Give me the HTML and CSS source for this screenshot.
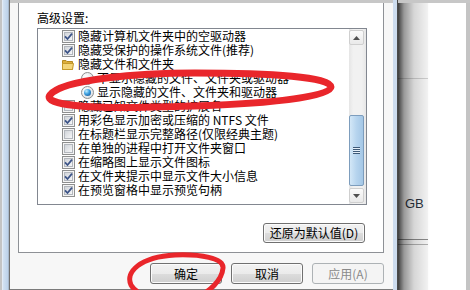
FILE: index.html
```html
<!DOCTYPE html>
<html lang="zh-CN">
<head>
<meta charset="utf-8">
<title>文件夹选项</title>
<link rel="stylesheet" href="styles.css">
</head>
<body>
<div class="screen">
  <div class="frame-l"></div>
  <div class="client">
    <div class="tabpage">
      <div class="label">高级设置:</div>
      <div class="listbox">
        <ul class="rows">
          <li class="row lv1"><span class="cb"><i></i><svg viewBox="0 0 11 11"><path d="M2 5.3 4.5 8 9 2.6"/></svg></span><span>隐藏计算机文件夹中的空驱动器</span></li>
          <li class="row lv1"><span class="cb"><i></i><svg viewBox="0 0 11 11"><path d="M2 5.3 4.5 8 9 2.6"/></svg></span><span>隐藏受保护的操作系统文件(推荐)</span></li>
          <li class="row lv1"><svg class="fold" viewBox="0 0 12 13"><path class="fb" d="M0.5 2.5H4L5 3.5H10.5V11.5H0.5Z"/><path class="ff" d="M0.5 5.5H11.5L10.5 11.5H0.5Z"/></svg><span>隐藏文件和文件夹</span></li>
          <li class="row lv2"><span class="rb"></span><span>不显示隐藏的文件、文件夹或驱动器</span></li>
          <li class="row lv2"><span class="rb on"></span><span>显示隐藏的文件、文件夹和驱动器</span></li>
          <li class="row lv1"><span class="cb"><i></i></span><span>隐藏已知文件类型的扩展名</span></li>
          <li class="row lv1"><span class="cb"><i></i><svg viewBox="0 0 11 11"><path d="M2 5.3 4.5 8 9 2.6"/></svg></span><span>用彩色显示加密或压缩的 NTFS 文件</span></li>
          <li class="row lv1"><span class="cb"><i></i></span><span>在标题栏显示完整路径(仅限经典主题)</span></li>
          <li class="row lv1"><span class="cb"><i></i></span><span>在单独的进程中打开文件夹窗口</span></li>
          <li class="row lv1"><span class="cb"><i></i><svg viewBox="0 0 11 11"><path d="M2 5.3 4.5 8 9 2.6"/></svg></span><span>在缩略图上显示文件图标</span></li>
          <li class="row lv1"><span class="cb"><i></i><svg viewBox="0 0 11 11"><path d="M2 5.3 4.5 8 9 2.6"/></svg></span><span>在文件夹提示中显示文件大小信息</span></li>
          <li class="row lv1"><span class="cb"><i></i><svg viewBox="0 0 11 11"><path d="M2 5.3 4.5 8 9 2.6"/></svg></span><span>在预览窗格中显示预览句柄</span></li>
        </ul>
        <div class="vscroll">
          <div class="sb-btn"><svg viewBox="0 0 7 4"><path d="M3.5 0 7 4H0Z"/></svg></div>
          <div class="sb-track"><div class="sb-thumb"><div class="grip"></div></div></div>
          <div class="sb-btn"><svg viewBox="0 0 7 4"><path d="M0 0H7L3.5 4Z"/></svg></div>
        </div>
      </div>
      <div class="restore"><button class="btn wide">还原为默认值(D)</button></div>
    </div>
    <div class="btns">
      <button class="btn">确定</button>
      <button class="btn">取消</button>
      <button class="btn dis">应用(A)</button>
    </div>
  </div>
  <div class="frame-r"></div>
  <div class="behind">
    <div class="bcol">
      <div class="bline1"></div>
      <div class="gb">GB</div>
      <div class="bline2"></div>
      <div class="bline3"></div>
    </div>
    <div class="bblank"></div>
    <div class="bedge"></div>
  </div>
  <svg class="annot" width="470" height="290" viewBox="0 0 470 290">
    <path class="e1" d="M50,95 C62,79 140,73 195,73 C272,73 331,77 331,87 C331,98 262,105 152,107 C92,109 42,105 50,95 Z"/>
    <path class="e2" d="M175,255 C200,254 224,258 223,268 C222,280 210,292 195,298 C175,304 140,300 131,285 C125,272 140,257 175,255 Z"/>
  </svg>
</div>
</body>
</html>
```

FILE: styles.css
```css
* { box-sizing: border-box; }
html, body { margin: 0; padding: 0; }
body {
  width: 470px;
  height: 290px;
  overflow: hidden;
  background: #fff;
  font-family: "Noto Sans CJK SC", "Noto Sans", sans-serif;
  font-size: 12px;
  color: #000;
}
.screen {
  position: relative;
  display: flex;
  width: 470px;
  height: 290px;
}
.frame-l {
  width: 10px;
  flex: none;
  background: linear-gradient(to right, #c4c4c4 0 2px, #e2ebf6 2px 3px, #d3e2f2 3px, #bcd1e9 8px, #a8b9cc 8px 9px, #6f6f6f 9px 10px);
}
.client {
  width: 383px;
  flex: none;
  display: flex;
  flex-direction: column;
  background: #f7f7f7;
  border-top: 3px solid #c7c7c7;
  border-bottom: 1px solid #7b7b7b;
  padding: 0 9px 0 8px;
}
.tabpage {
  background: #fff;
  border: 1px solid #8e9196;
  border-top: 0;
  padding: 8px 16px 9px 18px;
  display: flex;
  flex-direction: column;
}
.label {
  height: 14px;
  line-height: 14px;
  white-space: nowrap;
}
.listbox {
  margin-top: 3px;
  height: 177px;
  border: 1px solid #828790;
  display: flex;
  background: #fff;
}
.rows {
  flex: 1;
  list-style: none;
  margin: 0;
  padding: 0;
}
.row {
  height: 14px;
  display: flex;
  align-items: center;
  white-space: nowrap;
  line-height: 14px;
}
.lv1 { padding-left: 24px; }
.lv2 { padding-left: 43px; }
.cb {
  width: 13px;
  height: 13px;
  flex: none;
  display: grid;
  border: 1px solid #8e8f8f;
  background: #f4f4f4;
  margin-right: 3px;
}
.cb i {
  grid-area: 1 / 1;
  margin: 1px;
  border: 1px solid #b3b7bd;
  background: linear-gradient(135deg, #d0d4d9, #f6f7f8);
}
.cb svg {
  grid-area: 1 / 1;
  width: 11px;
  height: 11px;
  fill: none;
  stroke: #3d5488;
  stroke-width: 1.8;
}
.fold {
  width: 12px;
  height: 13px;
  flex: none;
  margin-right: 4px;
}
.fold .fb { fill: #dcae3c; stroke: #b58a22; }
.fold .ff { fill: #f3d57a; stroke: #c59a2c; }
.rb {
  width: 13px;
  height: 13px;
  flex: none;
  border-radius: 50%;
  border: 1px solid #8e8f8f;
  background: radial-gradient(circle at 35% 35%, #fff, #e2e4e7 70%, #cfd2d6);
  display: grid;
  place-items: center;
  margin-right: 3px;
}
.rb.on::after {
  content: "";
  width: 7px;
  height: 7px;
  border-radius: 50%;
  background: radial-gradient(circle at 35% 30%, #c4f0ff 0, #3a9ee0 45%, #14457f 100%);
}
.vscroll {
  width: 17px;
  flex: none;
  display: flex;
  flex-direction: column;
  padding: 1px 2px 1px 0;
  background: linear-gradient(to right, #e5e5e5, #f1f1f1 25%, #f1f1f1 75%, #e7e7e7);
}
.sb-btn {
  height: 15px;
  flex: none;
  border: 1px solid #cfcfcf;
  border-radius: 2px;
  background: linear-gradient(#fbfbfb, #e9e9e9);
  display: flex;
  align-items: center;
  justify-content: center;
}
.sb-btn svg {
  width: 7px;
  height: 4px;
  fill: #505050;
}
.sb-track {
  flex: 1;
  display: flex;
  flex-direction: column;
}
.sb-thumb {
  margin-top: 70px;
  height: 71px;
  border: 1px solid #7d9dbd;
  border-radius: 2px;
  background: linear-gradient(to right, #d3e7f7, #b6d4ee 50%, #a4c7e6);
  display: flex;
  align-items: center;
  justify-content: center;
}
.grip {
  width: 7px;
  height: 7px;
  background: repeating-linear-gradient(to bottom, #3e5a78 0 1px, #e6f0f9 1px 2px);
}
.restore {
  margin-top: 18px;
  display: flex;
  justify-content: flex-end;
  padding-right: 2px;
}
.btn {
  font: inherit;
  font-size: 12px;
  line-height: 14px;
  color: #000;
  height: 20px;
  padding: 0;
  border: 1px solid #707070;
  border-radius: 3px;
  background: linear-gradient(#f2f2f2, #ebebeb 50%, #dddddd 50%, #cfcfcf);
  box-shadow: inset 0 0 0 1px #fbfbfb;
}
.btn.wide { width: 102px; }
.btns {
  margin-top: 10px;
  display: flex;
  justify-content: flex-end;
  gap: 9px;
}
.btns .btn {
  width: 72px;
  height: 21px;
}
.btn.dis {
  border-color: #adb2b5;
  background: #f4f4f4;
  color: #8a8a8a;
  box-shadow: none;
}
.frame-r {
  width: 5px;
  flex: none;
  background: linear-gradient(to right, #cddcee 0 4px, #4a4a4a 4px);
}
.behind {
  flex: 1;
  position: relative;
  display: flex;
  border-top: 3px solid #c7c7c7;
  background: #fff;
}
.behind::before {
  content: "";
  position: absolute;
  left: 0;
  top: 0;
  bottom: 0;
  width: 34px;
  background: linear-gradient(to right, rgba(0,0,0,.75), rgba(0,0,0,.38) 6px, rgba(0,0,0,.13) 16px, rgba(0,0,0,0) 32px);
}
.bcol {
  width: 30px;
  flex: none;
  display: flex;
  flex-direction: column;
  background: #f6f6f6;
}
.bline1 { margin-top: 75px; height: 1px; background: #cfcfcf; }
.gb {
  margin-top: 118px;
  padding-left: 7px;
  height: 13px;
  line-height: 13px;
  font-family: "Liberation Sans", sans-serif;
  font-size: 13px;
  color: #2a3340;
}
.bline2 { margin-top: 29px; height: 1px; background: #8a8a8a; }
.bline3 { margin-top: 4px; height: 1px; background: #b0b0b0; }
.bblank { flex: 1; }
.bedge { width: 4px; flex: none; background: #c4c4c4; }
.annot {
  position: absolute;
  left: 0;
  top: 0;
  pointer-events: none;
  fill: none;
  stroke: #e9262b;
  stroke-linecap: round;
}
.annot .e1 { stroke-width: 7; }
.annot .e2 { stroke-width: 5; }
```
